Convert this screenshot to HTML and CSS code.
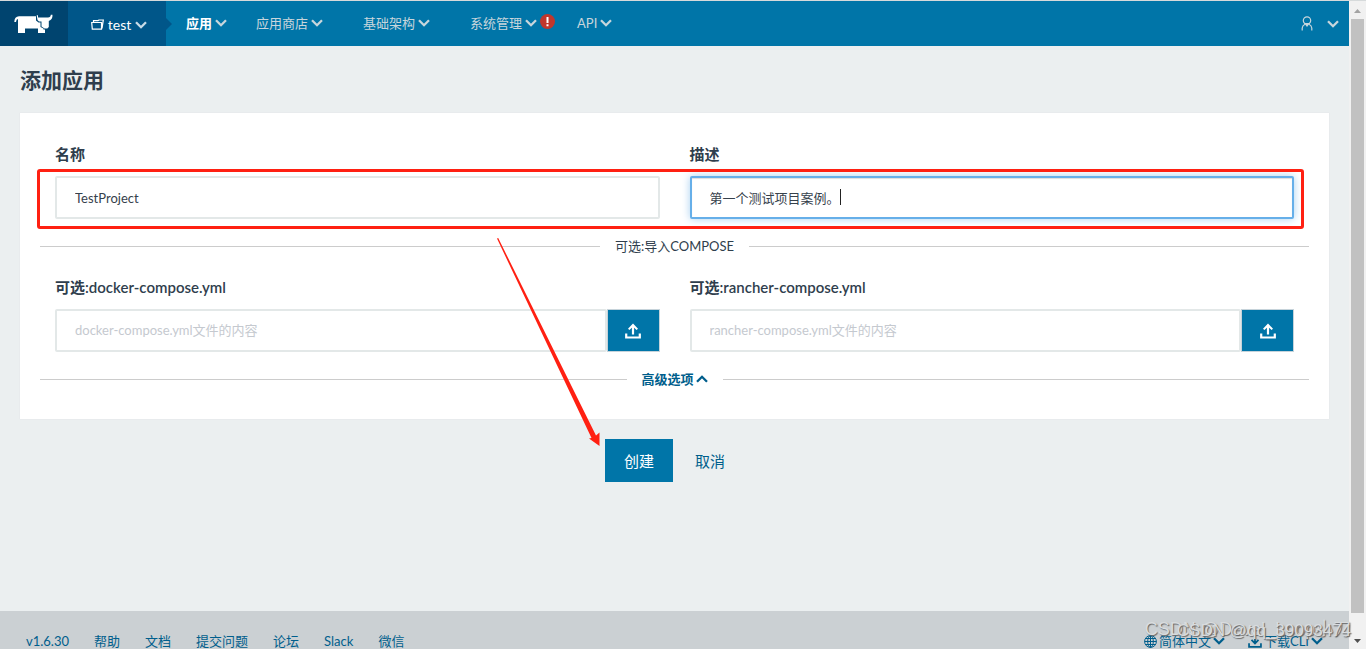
FILE: index.html
```html
<!DOCTYPE html>
<html lang="zh-CN">
<head>
<meta charset="utf-8">
<title>添加应用</title>
<link rel="stylesheet" href="styles.css">
</head>
<body>
<svg class="defs" aria-hidden="true">
  <symbol id="chevron" viewBox="0 0 12 8"><path d="M1 1.2 L6 6.2 L11 1.2" fill="none" stroke="currentColor" stroke-width="2.3"/></symbol>
  <symbol id="upload" viewBox="0 0 16 16"><path d="M1.2 10.5V14.5H14.8V10.500M8 11.500V2.500" fill="none" stroke="currentColor" stroke-width="2.2"/><path d="M8 0.500L13 5.700L11.600 7L8 3.700L4.400 7L3 5.700Z" fill="currentColor"/></symbol>
</svg>
<div class="window">
  <div class="page">
    <header class="topbar">
      <a class="logo" href="#" aria-label="Rancher">
        <svg width="40" height="20" viewBox="0 0 40 20" fill="#fff"><path d="M0.300 8Q0.500 2.500 5 2.300H22V6.500L24.500 8.500H26.500V13L29.500 14.500V15.500H31V19H24V14.500H11V19H4V5Q2.300 5.200 2 8Z"/><path d="M22.700 1.300H24V3.500H34Q36.800 3.300 36.800 0.800H38.500Q38.800 5.500 34.800 7V13L33.300 14.500H30.500L27.500 12.500V7.500H25L23.500 6Z"/></svg>
      </a>
      <button class="env" type="button">
        <svg width="13" height="11" viewBox="0 0 13 11" fill="none" stroke="#fff" stroke-width="1.200"><path d="M0.700 3.500H10.500V10.200H1.300ZM2.500 3.500V1.600H7L8 1H12.300L11 9.500"/></svg>
        <span>test</span>
        <svg class="chev"><use href="#chevron"/></svg>
      </button>
      <nav class="nav">
        <a class="active" href="#">应用<svg class="chev"><use href="#chevron"/></svg></a>
        <a class="wide" href="#">应用商店<svg class="chev"><use href="#chevron"/></svg></a>
        <a class="wide" href="#">基础架构<svg class="chev"><use href="#chevron"/></svg></a>
        <a class="alerting" href="#">系统管理<svg class="chev"><use href="#chevron"/></svg><svg class="alert" viewBox="0 0 15 15"><circle cx="7.500" cy="7.500" r="7.500" fill="#c0362c"/><path d="M6.500 3H8.500V9H6.500ZM6.500 10.300H8.500V12.300H6.500Z" fill="#fff"/></svg></a>
        <a href="#">API<svg class="chev"><use href="#chevron"/></svg></a>
      </nav>
      <button class="user" type="button" aria-label="用户">
        <svg width="12" height="15" viewBox="0 0 12 15" fill="none" stroke="currentColor" stroke-width="1.200"><circle cx="6" cy="4.500" r="3.700"/><path d="M1.200 14.500V12Q1.500 9.500 4 8.300M10.800 14.500V12Q10.500 9.500 8 8.300"/><path d="M3 7H9L6 11Z" fill="currentColor" stroke="none"/></svg>
        <svg class="chev"><use href="#chevron"/></svg>
      </button>
    </header>

    <main class="content">
      <h1>添加应用</h1>
      <form class="form">
        <section class="card">
          <div class="row">
            <div class="field">
              <label for="name">名称</label>
              <input id="name" type="text" value="TestProject">
            </div>
            <div class="field">
              <label for="desc">描述</label>
              <div class="focusbox">
                <input id="desc" class="focused" type="text" value="第一个测试项目案例。">
                <span class="caret"></span>
              </div>
            </div>
            <div class="highlight"></div>
          </div>
          <div class="divider"><span>可选:导入COMPOSE</span></div>
          <div class="row files">
            <div class="field">
              <label for="docker">可选:docker-compose.yml</label>
              <div class="group">
                <input id="docker" type="text" placeholder="docker-compose.yml文件的内容">
                <button type="button" aria-label="上传"><svg width="16" height="16"><use href="#upload"/></svg></button>
              </div>
            </div>
            <div class="field">
              <label for="rancher">可选:rancher-compose.yml</label>
              <div class="group">
                <input id="rancher" type="text" placeholder="rancher-compose.yml文件的内容">
                <button type="button" aria-label="上传"><svg width="16" height="16"><use href="#upload"/></svg></button>
              </div>
            </div>
          </div>
          <div class="divider more"><button type="button">高级选项<svg class="chev up"><use href="#chevron"/></svg></button></div>
        </section>
        <div class="actions">
          <button class="create" type="submit">创建</button>
          <button class="cancel" type="button">取消</button>
        </div>
      </form>
    </main>

    <footer class="footer">
      <a href="#">v1.6.30</a><a href="#">帮助</a><a href="#">文档</a><a href="#">提交问题</a><a href="#">论坛</a><a href="#">Slack</a><a href="#">微信</a>
      <div class="tools">
        <button type="button"><svg width="13" height="13" viewBox="0 0 13 13" fill="none" stroke="currentColor"><circle cx="6.500" cy="6.500" r="5.900"/><ellipse cx="6.500" cy="6.500" rx="2.800" ry="5.900"/><path d="M6.500 0.500V12.500M0.500 6.500H12.500M1.500 3.500H11.500M1.500 9.500H11.500"/></svg>简体中文<svg class="chev"><use href="#chevron"/></svg></button>
        <button type="button"><svg width="14" height="14" viewBox="0 0 16 16"><path d="M1.200 10.500V14.700H14.800V10.500M8 1V10M4 6.800L8 10.800L12 6.800" fill="none" stroke="currentColor" stroke-width="2"/></svg>下载CLI<svg class="chev"><use href="#chevron"/></svg></button>
      </div>
    </footer>
  </div>

  <div class="scrollbar" aria-hidden="true">
    <svg width="7" height="4" viewBox="0 0 7 4"><path d="M0 4L3.500 0L7 4Z" fill="#a3a3a3"/></svg>
    <div class="thumb"></div>
    <svg width="7" height="4" viewBox="0 0 7 4"><path d="M0 0L3.500 4L7 0Z" fill="#505050"/></svg>
  </div>
</div>
<svg class="arrow" width="106" height="210" viewBox="0 0 106 210" aria-hidden="true"><path d="M0 0.500L1.200 0L99 197.500L102.500 194.500V208L92 200.500L94.500 200Z" fill="#ff2012"/></svg>
<div class="mark large">CSDN @Devel_Loop小刀</div>
<div class="mark small">CSDN @qq_39093474</div>
</body>
</html>
```

FILE: styles.css
```css
* { box-sizing: border-box; }
body {
  margin: 0;
  font-family: Lato, "Noto Sans CJK SC", sans-serif;
  font-size: 13px;
  line-height: 20px;
  color: #2f3e4d;
  background: #ebeff0;
  overflow: hidden;
}
a { color: #005e8c; text-decoration: none; }
button { font: inherit; border: 0; padding: 0; background: none; color: #005e8c; }
.defs { position: absolute; width: 0; height: 0; }
.window { display: flex; height: 100vh; border-top: 1px solid #d6dadb; position: relative; }
.page { flex: 1; min-width: 0; display: flex; flex-direction: column; }
.chev { width: 12px; height: 8px; flex: none; }
.chev.up { transform: rotate(180deg); }

.topbar { display: flex; height: 45px; flex: none; background: #0075a8; }
.logo { width: 68px; display: flex; align-items: center; justify-content: center; background: #00446f; }
.env {
  width: 98px; display: flex; align-items: center; justify-content: center; gap: 4px;
  padding: 2px 0 0 4px; background: #005689; color: #fff; font-size: 14px; position: relative;
}
.env .chev { color: #c8dce8; }
.env::after {
  content: ""; position: absolute; left: 100%; top: 17px;
  border: 6px solid transparent; border-right: 0; border-left-color: #005689;
}
.nav { display: flex; flex: 1; padding: 0 0 2px 20px; gap: 29px; }
.nav a { display: flex; align-items: center; gap: 3px; color: #c8d6dc; }
.nav .active { color: #fff; font-weight: 700; }
.nav .active .chev { color: #c8d6dc; }
.nav .wide { margin-right: 11px; }
.nav .alerting { margin-right: -7px; }
.alert { width: 15px; height: 15px; margin-bottom: 3px; }
.user { display: flex; align-items: center; gap: 14px; padding-right: 10px; color: #c8d6dc; }

.content { flex: 1; padding: 19px 20px 0; }
h1 { margin: 0 0 18px; font-size: 21px; line-height: 30px; font-weight: 700; }
.card { background: #fff; padding: 29px 20px 30px; box-shadow: 0 0 1px #d8dddf; }
.row { display: grid; grid-template-columns: 1fr 1fr; gap: 30px; padding: 0 15px; position: relative; }
.field { min-width: 0; }
label { display: block; font-size: 15px; line-height: 24px; font-weight: 600; margin-bottom: 10px; }
input {
  display: block; width: 100%; height: 43px; padding: 0 18px;
  border: 2px solid #e3e8e8; border-radius: 2px; outline: 0; background: #fff;
  font: inherit; color: #36414c;
}
input::placeholder { color: #c5c9cf; opacity: 1; }
.focusbox { position: relative; }
.focused { border-color: #66afe9; box-shadow: inset 0 1px 1px #ddd, 0 0 8px #a8d0f0; }
.caret { position: absolute; left: 150px; top: 13px; width: 1px; height: 16px; background: #222; }
.highlight {
  position: absolute; left: -3px; right: 5px; top: 27px; height: 60px;
  border: 3px solid #ff2012; border-radius: 3px;
}
.divider { display: flex; align-items: center; gap: 15px; margin: 17px 0 19px; }
.divider::before, .divider::after { content: ""; flex: 1; height: 1px; background: #ccc; }
.group { display: flex; }
.group input { flex: 1; min-width: 0; padding-bottom: 2px; }
.group button {
  width: 53px; height: 43px; display: grid; place-items: center;
  background: #0075a8; color: #fff; border: 1px solid #c6d3da;
}
.more { margin-bottom: 0; }
.more button { display: flex; align-items: center; gap: 2px; font-weight: 700; }
.actions { display: flex; justify-content: center; gap: 3px; padding: 20px 0; }
.actions button { height: 43px; padding: 0 19px; font-size: 15px; }
.create { background: #0075a8; color: #fff; }

.footer {
  flex: none; height: 38px; overflow: hidden; display: flex; gap: 25px;
  padding: 20px 26px 0; background: #cbd0d3;
}
.tools { margin-left: auto; display: flex; gap: 23px; }
.tools button { display: flex; align-items: center; gap: 2px; height: 20px; }

.scrollbar {
  width: 17px; display: flex; flex-direction: column; align-items: center; gap: 6px;
  padding: 8px 0 6px; background: #f1f1f1;
}
.scrollbar svg { flex: none; }
.thumb { width: 13px; flex: 1; margin-bottom: 20px; background: #c1c1c1; }

.arrow { position: absolute; left: 497px; top: 238px; pointer-events: none; }
.mark {
  position: absolute; white-space: nowrap; color: #d9dcde;
  font-family: "Liberation Sans", "Noto Sans CJK SC", sans-serif;
  text-shadow: 1px 1px 1px #666; pointer-events: none;
}
.large { right: 15px; bottom: 10px; font-size: 18px; }
.small { right: 15px; bottom: 8px; font-size: 17px; }
```
